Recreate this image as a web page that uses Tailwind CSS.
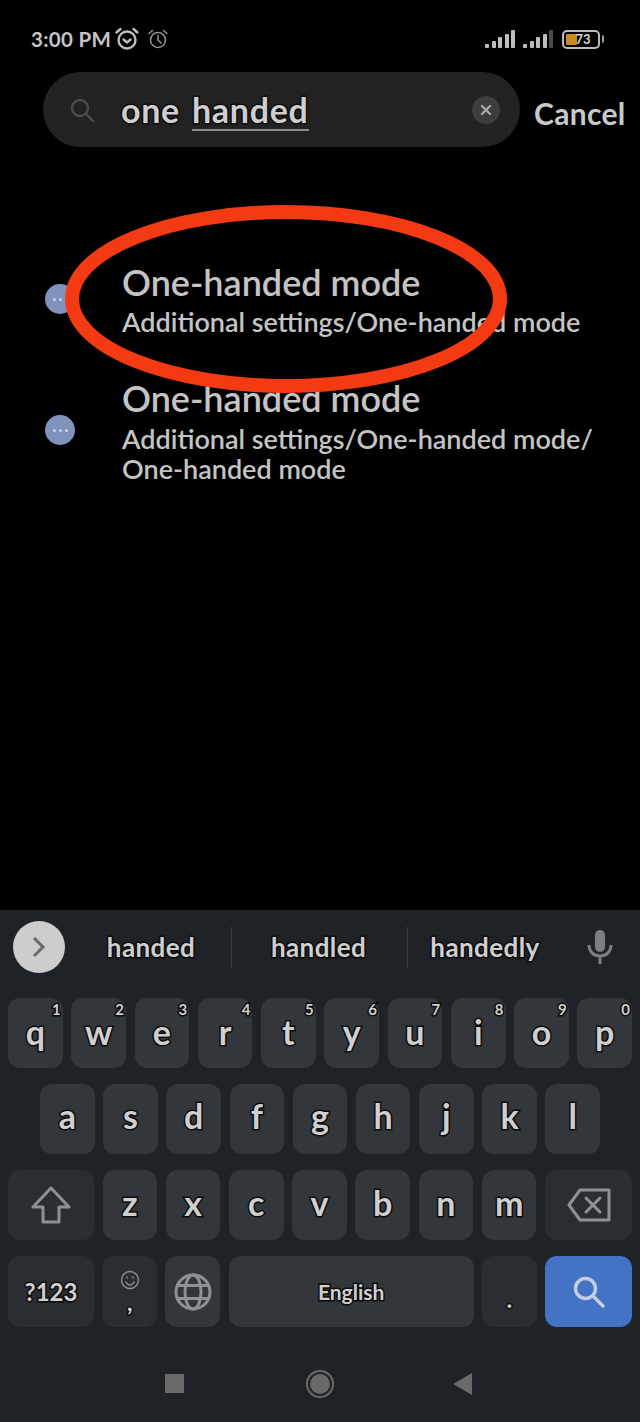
<!DOCTYPE html>
<html lang="en">
<head>
    <meta charset="UTF-8">
    <meta name="viewport" content="width=device-width, initial-scale=1.0">
    <title>Search settings</title>
    <script src="https://cdn.jsdelivr.net/npm/@tailwindcss/browser@4"></script>
</head>
<body class="bg-black">
<div class="relative w-[640px] h-[1422px] flex flex-col overflow-hidden bg-black text-[#c4c4c4] font-['Lato',sans-serif]">
    <!-- Status bar -->
    <div class="h-[72px] flex items-start justify-between pl-[31px] pr-[36px] pt-[26px]">
        <div class="flex items-center h-[26px]">
            <span class="text-[20.5px] font-bold leading-none tracking-[0.3px] w-[83px] whitespace-nowrap">3:00 PM</span>
            <svg class="w-[26px] h-[26px]" viewBox="0 0 26 26" fill="none" stroke="#bdbdbd" stroke-width="2.4" stroke-linecap="round"><circle cx="13" cy="14" r="8.5"/><path d="M9.5 13.5l3.5 3 3.5-3M2.5 6.5l4-3.5M23.5 6.5l-4-3.5"/></svg>
            <svg class="w-[22px] h-[22px] ml-[7px]" viewBox="0 0 22 22" fill="none" stroke="#8f8f8f" stroke-width="1.6" stroke-linecap="round"><circle cx="11" cy="12" r="7.5"/><path d="M11 7.5V12l3 3M2 5.5l3.5-3M20 5.5l-3.5-3"/></svg>
        </div>
        <div class="flex items-center h-[26px]">
            <div class="flex items-end gap-[2.5px] h-[18px]">
                <i class="block w-[4px] h-[4px] bg-[#bdbdbd] rounded-[1px]"></i>
                <i class="block w-[4px] h-[7px] bg-[#bdbdbd] rounded-[1px]"></i>
                <i class="block w-[4px] h-[11px] bg-[#bdbdbd] rounded-[1px]"></i>
                <i class="block w-[4px] h-[14px] bg-[#bdbdbd] rounded-[1px]"></i>
                <i class="block w-[4px] h-[18px] bg-[#bdbdbd] rounded-[1px]"></i>
            </div>
            <div class="flex items-end gap-[2.5px] h-[18px] ml-[8px]">
                <i class="block w-[4px] h-[4px] bg-[#bdbdbd] rounded-[1px]"></i>
                <i class="block w-[4px] h-[7px] bg-[#bdbdbd] rounded-[1px]"></i>
                <i class="block w-[4px] h-[11px] bg-[#bdbdbd] rounded-[1px]"></i>
                <i class="block w-[4px] h-[14px] bg-[#bdbdbd] rounded-[1px]"></i>
                <i class="block w-[4px] h-[18px] bg-[#4a4a4a] rounded-[1px]"></i>
            </div>
            <div class="relative ml-[9px] w-[38px] h-[19px] rounded-[5px] border-2 border-[#bdbdbd] flex items-center pl-[2px]">
                <span class="block w-[11px] h-[11px] bg-[#c98a25] rounded-[1px]"></span>
                <span class="absolute left-[7px] top-0 w-[24px] text-center text-[13px] leading-[15px] font-bold text-[#d6d6d6]">73</span>
            </div>
            <span class="block ml-[2px] w-[2px] h-[8px] bg-[#9a9a9a] rounded-r-sm"></span>
        </div>
    </div>

    <!-- Search row -->
    <div class="flex items-center pl-[43px] h-[75px]">
        <div class="w-[477px] h-[75px] rounded-full bg-[#222222] flex items-center pl-[26px] pr-[20px]">
            <svg class="w-[26px] h-[26px] shrink-0" viewBox="0 0 26 26" fill="none" stroke="#4b4b4b" stroke-width="2.4" stroke-linecap="round"><circle cx="11" cy="11" r="8"/><path d="M17 17l7 7"/></svg>
            <div class="ml-[26px] mt-[4px] text-[34px] font-bold leading-none text-[#cfcfcf] tracking-[0.7px] [-webkit-text-stroke:3px_#0c0c0c] [paint-order:stroke_fill] whitespace-nowrap">
                one <span class="inline-block border-b-2 border-[#8a8a8a] pb-[2px] ml-[3px]">handed</span>
            </div>
            <span class="ml-auto w-[28px] h-[28px] rounded-full bg-[#3d3d3d] flex items-center justify-center">
                <svg class="w-[12px] h-[12px]" viewBox="0 0 12 12" stroke="#a8a8a8" stroke-width="2.4" stroke-linecap="round"><path d="M2 2l8 8M10 2l-8 8"/></svg>
            </span>
        </div>
        <span class="ml-[14px] mt-[6px] text-[30px] font-bold leading-none tracking-[0.3px] text-[#c9c9c9]">Cancel</span>
    </div>

    <!-- Results -->
    <div class="pl-[45px] pr-[40px] pt-[106px] flex flex-col">
        <div class="flex items-center h-[92px]">
            <span class="w-[30px] h-[30px] shrink-0 rounded-full bg-[#8093bd] flex items-center justify-center gap-[3px]">
                <i class="block w-[3px] h-[3px] rounded-full bg-[#c9d2e6]"></i><i class="block w-[3px] h-[3px] rounded-full bg-[#c9d2e6]"></i><i class="block w-[3px] h-[3px] rounded-full bg-[#c9d2e6]"></i>
            </span>
            <div class="ml-[47px] mt-[2px]">
                <p class="text-[36px] leading-[44px] font-semibold whitespace-nowrap">One-handed mode</p>
                <p class="text-[27px] leading-[36px] font-semibold whitespace-nowrap">Additional settings/One-handed mode</p>
            </div>
        </div>
        <div class="flex items-center mt-[31px]">
            <span class="w-[30px] h-[30px] shrink-0 rounded-full bg-[#8093bd] flex items-center justify-center gap-[3px]">
                <i class="block w-[3px] h-[3px] rounded-full bg-[#c9d2e6]"></i><i class="block w-[3px] h-[3px] rounded-full bg-[#c9d2e6]"></i><i class="block w-[3px] h-[3px] rounded-full bg-[#c9d2e6]"></i>
            </span>
            <div class="ml-[47px]">
                <p class="text-[36px] leading-[44px] font-semibold whitespace-nowrap">One-handed mode</p>
                <p class="text-[27px] leading-[30px] font-semibold whitespace-nowrap mt-[4px]">Additional settings/One-handed mode/</p>
                <p class="text-[27px] leading-[30px] font-semibold whitespace-nowrap">One-handed mode</p>
            </div>
        </div>
    </div>

    <!-- Red annotation -->
    <svg class="absolute left-[60px] top-[202px] w-[452px] h-[196px]" viewBox="0 0 452 196" fill="none"><ellipse cx="226" cy="97" rx="214" ry="87" stroke="#f43a12" stroke-width="14"/></svg>

    <!-- Keyboard -->
    <div class="absolute left-0 right-0 bottom-0 h-[512px] bg-[#1f2327] flex flex-col">
        <div class="flex items-center h-[88px] pl-[13px] pr-[27px] pb-[14px]">
            <span class="w-[52px] h-[52px] rounded-full bg-[#cdcdcd] flex items-center justify-center shrink-0">
                <svg class="w-[16px] h-[24px]" viewBox="0 0 16 24" fill="none" stroke="#6a6a6a" stroke-width="3"><path d="M3 3l9 9-9 9"/></svg>
            </span>
            <div class="flex items-center text-[26px] font-bold text-[#cfcfcf] tracking-[0.4px] [-webkit-text-stroke:3px_#0c0c0c] [paint-order:stroke_fill]">
                <span class="w-[166px] pl-[6px] text-center">handed</span>
                <i class="block w-px h-[41px] bg-[#3a3e42]"></i>
                <span class="w-[175px] pr-[2px] text-center">handled</span>
                <i class="block w-px h-[41px] bg-[#3a3e42]"></i>
                <span class="w-[154px] text-center">handedly</span>
            </div>
            <svg class="ml-auto w-[26px] h-[34px]" viewBox="0 0 26 34" fill="none"><rect x="8" y="0" width="10" height="22" rx="5" fill="#7b7e82"/><path d="M2 15c0 7 5 11 11 11s11-4 11-11M13 26v8" stroke="#7b7e82" stroke-width="3"/></svg>
        </div>

        <div class="flex flex-col gap-[16px] text-[34px] font-bold text-[#cfcfcf] [-webkit-text-stroke:3px_#0c0c0c] [paint-order:stroke_fill]">
            <div class="flex gap-[8.6px] px-[8px] h-[70px]">
                <span class="relative flex-1 pb-[4px] rounded-[12px] bg-[#33373b] flex items-center justify-center">q<sup class="absolute top-[4px] right-[2px] text-[15px] leading-none">1</sup></span>
                <span class="relative flex-1 pb-[4px] rounded-[12px] bg-[#33373b] flex items-center justify-center">w<sup class="absolute top-[4px] right-[2px] text-[15px] leading-none">2</sup></span>
                <span class="relative flex-1 pb-[4px] rounded-[12px] bg-[#33373b] flex items-center justify-center">e<sup class="absolute top-[4px] right-[2px] text-[15px] leading-none">3</sup></span>
                <span class="relative flex-1 pb-[4px] rounded-[12px] bg-[#33373b] flex items-center justify-center">r<sup class="absolute top-[4px] right-[2px] text-[15px] leading-none">4</sup></span>
                <span class="relative flex-1 pb-[4px] rounded-[12px] bg-[#33373b] flex items-center justify-center">t<sup class="absolute top-[4px] right-[2px] text-[15px] leading-none">5</sup></span>
                <span class="relative flex-1 pb-[4px] rounded-[12px] bg-[#33373b] flex items-center justify-center">y<sup class="absolute top-[4px] right-[2px] text-[15px] leading-none">6</sup></span>
                <span class="relative flex-1 pb-[4px] rounded-[12px] bg-[#33373b] flex items-center justify-center">u<sup class="absolute top-[4px] right-[2px] text-[15px] leading-none">7</sup></span>
                <span class="relative flex-1 pb-[4px] rounded-[12px] bg-[#33373b] flex items-center justify-center">i<sup class="absolute top-[4px] right-[2px] text-[15px] leading-none">8</sup></span>
                <span class="relative flex-1 pb-[4px] rounded-[12px] bg-[#33373b] flex items-center justify-center">o<sup class="absolute top-[4px] right-[2px] text-[15px] leading-none">9</sup></span>
                <span class="relative flex-1 pb-[4px] rounded-[12px] bg-[#33373b] flex items-center justify-center">p<sup class="absolute top-[4px] right-[2px] text-[15px] leading-none">0</sup></span>
            </div>
            <div class="flex gap-[8.6px] px-[40px] h-[70px]">
                <span class="flex-1 pb-[8px] rounded-[12px] bg-[#33373b] flex items-center justify-center">a</span>
                <span class="flex-1 pb-[8px] rounded-[12px] bg-[#33373b] flex items-center justify-center">s</span>
                <span class="flex-1 pb-[8px] rounded-[12px] bg-[#33373b] flex items-center justify-center">d</span>
                <span class="flex-1 pb-[8px] rounded-[12px] bg-[#33373b] flex items-center justify-center">f</span>
                <span class="flex-1 pb-[8px] rounded-[12px] bg-[#33373b] flex items-center justify-center">g</span>
                <span class="flex-1 pb-[8px] rounded-[12px] bg-[#33373b] flex items-center justify-center">h</span>
                <span class="flex-1 pb-[8px] rounded-[12px] bg-[#33373b] flex items-center justify-center">j</span>
                <span class="flex-1 pb-[8px] rounded-[12px] bg-[#33373b] flex items-center justify-center">k</span>
                <span class="flex-1 pb-[8px] rounded-[12px] bg-[#33373b] flex items-center justify-center">l</span>
            </div>
            <div class="flex gap-[8.6px] px-[8px] h-[70px]">
                <span class="w-[86px] shrink-0 rounded-[12px] bg-[#2a2d31] flex items-center justify-center">
                    <svg class="w-[40px] h-[38px]" viewBox="0 0 40 38" fill="none" stroke="#8f9193" stroke-width="3" stroke-linejoin="round"><path d="M20 2L38 21H28V36H12V21H2Z"/></svg>
                </span>
                <span class="flex-1 pb-[6px] rounded-[12px] bg-[#33373b] flex items-center justify-center">z</span>
                <span class="flex-1 pb-[6px] rounded-[12px] bg-[#33373b] flex items-center justify-center">x</span>
                <span class="flex-1 pb-[6px] rounded-[12px] bg-[#33373b] flex items-center justify-center">c</span>
                <span class="flex-1 pb-[6px] rounded-[12px] bg-[#33373b] flex items-center justify-center">v</span>
                <span class="flex-1 pb-[6px] rounded-[12px] bg-[#33373b] flex items-center justify-center">b</span>
                <span class="flex-1 pb-[6px] rounded-[12px] bg-[#33373b] flex items-center justify-center">n</span>
                <span class="flex-1 pb-[6px] rounded-[12px] bg-[#33373b] flex items-center justify-center">m</span>
                <span class="w-[87px] shrink-0 rounded-[12px] bg-[#2a2d31] flex items-center justify-center">
                    <svg class="w-[44px] h-[34px]" viewBox="0 0 44 34" fill="none" stroke="#8f9193" stroke-width="3" stroke-linejoin="round" stroke-linecap="round"><path d="M13 2H42V32H13L2 17ZM19 10l14 14M33 10L19 24"/></svg>
                </span>
            </div>
            <div class="flex gap-[8.2px] px-[8px] h-[71px]">
                <span class="w-[86px] shrink-0 rounded-[12px] bg-[#2a2d31] flex items-center justify-center text-[24px]">?123</span>
                <span class="w-[55px] shrink-0 rounded-[12px] bg-[#2a2d31] flex flex-col items-center justify-center text-[24px] leading-none">
                    <svg class="w-[20px] h-[20px] mt-[2px]" viewBox="0 0 20 20" fill="none" stroke="#8f9193" stroke-width="1.4" stroke-linecap="round"><circle cx="10" cy="10" r="8.5"/><path d="M6 12c1 2 2.500 3 4 3s3-1 4-3M7 7v1M13 7v1"/></svg>
                    <span class="h-[26px]">,</span>
                </span>
                <span class="w-[55px] shrink-0 rounded-[12px] bg-[#33373b] flex items-center justify-center">
                    <svg class="w-[38px] h-[38px]" viewBox="0 0 38 38" fill="none" stroke="#8f9193" stroke-width="3"><circle cx="19" cy="19" r="17"/><ellipse cx="19" cy="19" rx="8" ry="17"/><path d="M4 12.500h30M4 25.500h30"/></svg>
                </span>
                <span class="flex-1 rounded-[12px] bg-[#33373b] flex items-center justify-center text-[21px]">English</span>
                <span class="w-[55px] shrink-0 rounded-[12px] bg-[#2a2d31] flex items-center justify-center pt-[14px] text-[24px]">.</span>
                <span class="w-[87px] shrink-0 rounded-[12px] bg-[#4472c4] flex items-center justify-center">
                    <svg class="w-[32px] h-[32px]" viewBox="0 0 32 32" fill="none" stroke="#c3cede" stroke-width="3.400" stroke-linecap="round"><circle cx="12.500" cy="12.500" r="10"/><path d="M20 20l10 10"/></svg>
                </span>
            </div>
        </div>

        <!-- Nav bar -->
        <div class="flex-1 flex items-center justify-center pt-[18px] pr-[4px]">
            <div class="flex items-center">
                <span class="block w-[19px] h-[19px] bg-[#6a6a6a]"></span>
                <span class="ml-[122px] w-[28px] h-[28px] rounded-full border-2 border-[#6a6a6a] flex items-center justify-center">
                    <i class="block w-[20px] h-[20px] rounded-full bg-[#6a6a6a]"></i>
                </span>
                <svg class="ml-[119px] w-[19px] h-[22px]" viewBox="0 0 19 22"><path d="M19 0V22L0 11Z" fill="#6a6a6a"/></svg>
            </div>
        </div>
    </div>
</div>
</body>
</html>
